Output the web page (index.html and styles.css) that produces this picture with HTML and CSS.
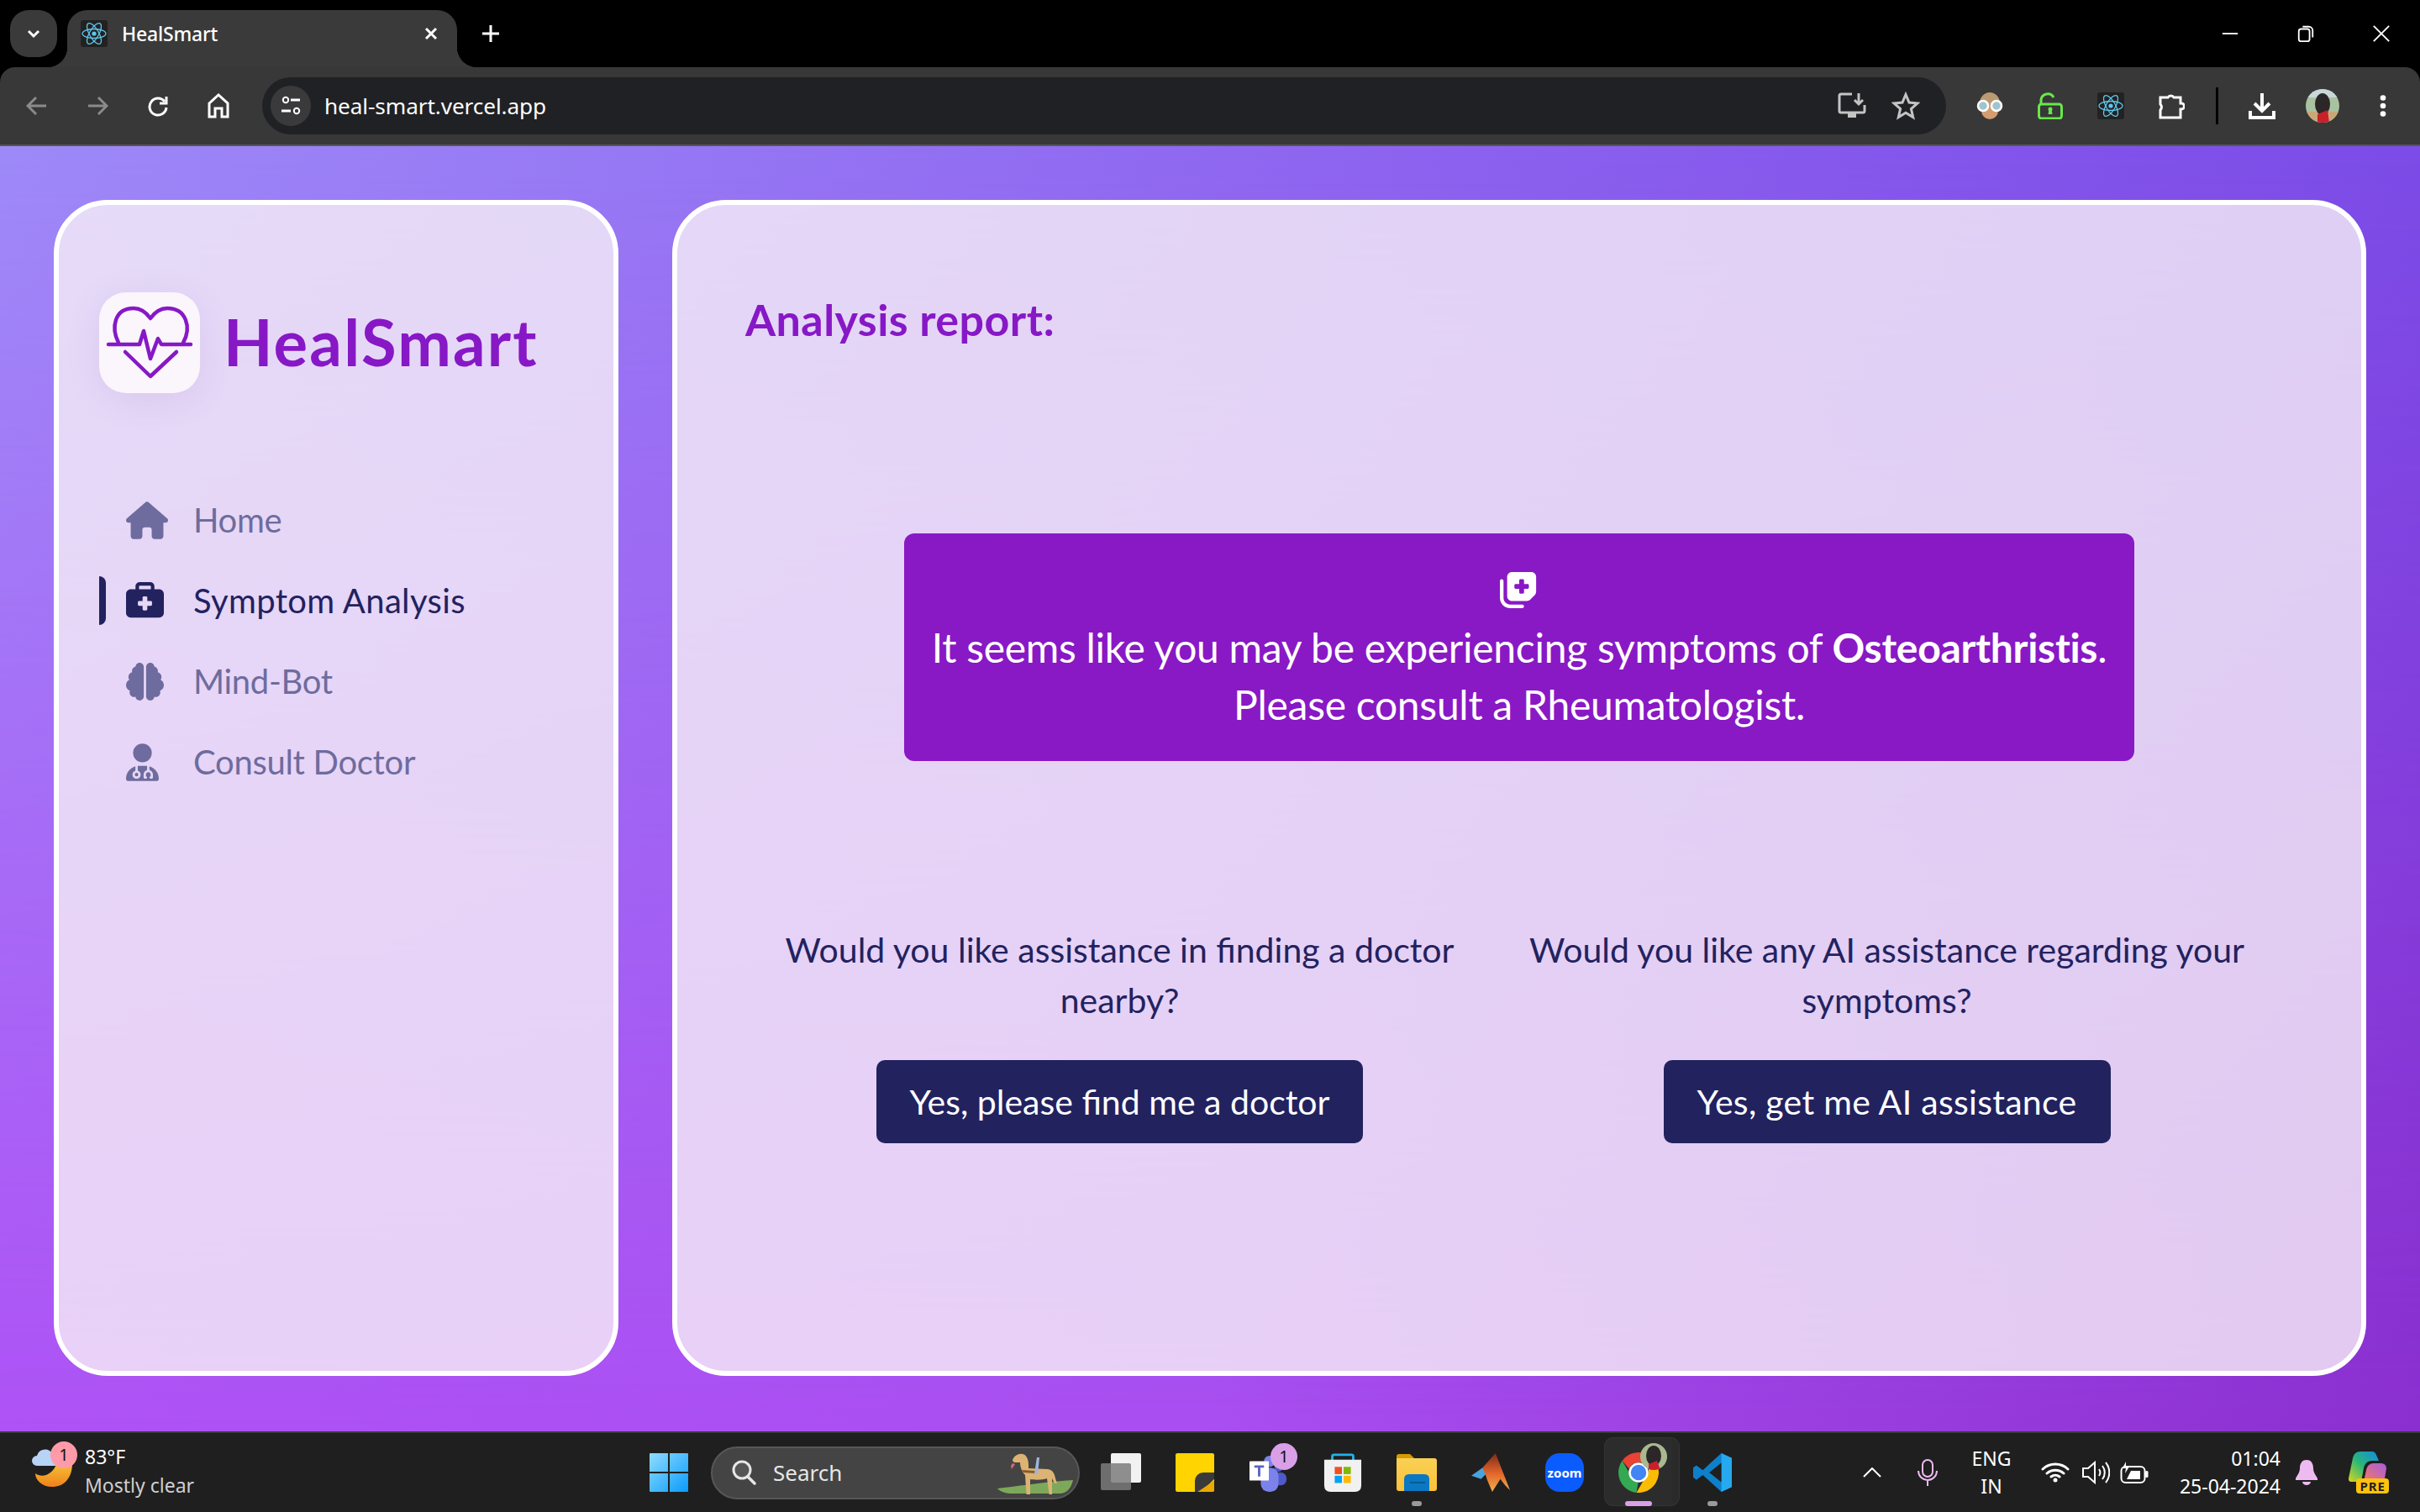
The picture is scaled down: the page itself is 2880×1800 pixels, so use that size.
FILE: index.html
```html
<!DOCTYPE html>
<html lang="en">
<head>
<meta charset="utf-8">
<title>HealSmart</title>
<link rel="stylesheet" href="styles.css">
</head>
<body>
<svg class="defs" width="0" height="0" aria-hidden="true">
  <symbol id="react" viewBox="0 0 32 32">
    <rect width="32" height="32" rx="3" fill="#222"/>
    <g fill="none" stroke="#5fc8ee" stroke-width="1.3">
      <ellipse cx="16" cy="16" rx="14" ry="5.500"/>
      <ellipse cx="16" cy="16" rx="14" ry="5.500" transform="rotate(60 16 16)"/>
      <ellipse cx="16" cy="16" rx="14" ry="5.500" transform="rotate(120 16 16)"/>
    </g>
    <circle cx="16" cy="16" r="2.600" fill="#5fc8ee"/>
  </symbol>
</svg>

<header class="tabstrip">
  <div class="tablist"><svg class="ico16" viewBox="0 0 16 16"><path d="M2 5l6 6 6-6" class="st-w3"/></svg></div>
  <div class="tab">
    <svg class="favicon"><use href="#react"/></svg>
    <span class="tab-title">HealSmart</span>
    <svg class="tab-x" viewBox="0 0 16 16"><path d="M2 2l12 12M14 2L2 14" class="st-w3"/></svg>
  </div>
  <svg class="newtab" viewBox="0 0 20 20"><path d="M10 0v20M0 10h20" class="st-w3"/></svg>
  <div class="winctl">
    <svg class="win-ico" viewBox="0 0 24 24"><path d="M2 12h20" class="st-w2"/></svg>
    <svg class="win-ico" viewBox="0 0 24 24"><rect x="3" y="6" width="14" height="16" rx="3" class="st-w2"/><path d="M8 3h8a5 5 0 0 1 5 5v9" class="st-w2"/></svg>
    <svg class="win-ico" viewBox="0 0 24 24"><path d="M2 2l20 20M22 2L2 22" class="st-w2"/></svg>
  </div>
</header>

<nav class="toolbar">
  <div class="tbtn"><svg class="ico26" viewBox="0 0 26 26"><path d="M24 13H3M12 3L2 13l10 10" class="st-g3"/></svg></div>
  <div class="tbtn"><svg class="ico26" viewBox="0 0 26 26"><path d="M2 13h21M14 3l10 10-10 10" class="st-g3"/></svg></div>
  <div class="tbtn"><svg class="ico26" viewBox="0 0 26 26"><path d="M21 8a10 10 0 1 0 2 7" class="st-w3"/><path d="M23 2v8h-8" class="st-w3"/></svg></div>
  <div class="tbtn"><svg class="ico28" viewBox="0 0 26 30"><path d="M2 12L13 2l11 10v16h-7v-10H9v10H2z" class="st-w3"/></svg></div>
  <div class="omnibox">
    <div class="chip"><svg class="ico26" viewBox="0 0 26 26"><circle cx="7" cy="6" r="3.200" class="st-w2"/><path d="M13 6h11M2 19h11" class="st-w3"/><circle cx="20" cy="19" r="3.200" class="st-w2"/></svg></div>
    <span class="url">heal-smart.vercel.app</span>
    <svg class="omni-ico install" viewBox="0 0 34 34"><path d="M17 3H4a2 2 0 0 0-2 2v18a2 2 0 0 0 2 2h26a2 2 0 0 0 2-2v-7" class="st-l3"/><path d="M12 25v6h10v-6" class="fill-l"/><path d="M25 2v12M20 10l5 5 5-5" class="st-l3"/></svg>
    <svg class="omni-ico star" viewBox="0 0 34 34"><path d="M17 3.500l4 9.500 10 .9-7.600 6.600 2.300 10L17 25.200 8.300 30.500l2.300-10L3 13.900l10-.9z" class="st-l3"/></svg>
  </div>
  <div class="exts">
    <div class="tbtn"><svg class="ico32" viewBox="0 0 32 32"><ellipse cx="16" cy="13" rx="12" ry="13" fill="#b99a72"/><ellipse cx="16" cy="22" rx="10" ry="10" fill="#d59c6f"/><circle cx="8" cy="16" r="6" fill="#9fc4cf" stroke="#fff" stroke-width="2.500"/><circle cx="24" cy="16" r="6" fill="#9fc4cf" stroke="#fff" stroke-width="2.500"/></svg></div>
    <div class="tbtn"><svg class="ico32" viewBox="0 0 32 32"><path d="M5 14V9a8 8 0 0 1 15-3" fill="none" stroke="#67e84a" stroke-width="3"/><rect x="2.500" y="14" width="27" height="17" rx="3" fill="none" stroke="#67e84a" stroke-width="3"/><circle cx="16" cy="20" r="2.500" fill="#67e84a"/><path d="M14.500 20h3l1 6h-5z" fill="#67e84a"/></svg></div>
    <div class="tbtn"><svg class="ico32"><use href="#react"/></svg></div>
    <div class="tbtn"><svg class="ico32" viewBox="0 0 32 32"><path d="M3 6h9a4 4 0 0 1 7 0h8v7h1a3 3 0 0 1 0 7h-1v10H3v-9a5.500 5.500 0 0 0 0-7z" class="st-w3"/></svg></div>
    <span class="tsep"></span>
    <div class="tbtn"><svg class="ico32" viewBox="0 0 32 32"><path d="M16 1v20M7 13l9 9 9-9" class="st-w3b"/><path d="M2 22v8h28v-8" class="st-w3b"/></svg></div>
    <div class="tbtn"><svg class="avatar" viewBox="0 0 40 40"><defs><clipPath id="av"><circle cx="20" cy="20" r="20"/></clipPath></defs><g clip-path="url(#av)"><rect width="40" height="40" fill="#a9c2a0"/><rect width="40" height="10" fill="#c9d7d8"/><rect y="27" width="40" height="13" fill="#c9a878"/><ellipse cx="20" cy="18" rx="9" ry="13" fill="#2b2628"/><path d="M14 30l12-5 2 15H14z" fill="#c8202b"/></g></svg></div>
    <div class="tbtn"><svg class="menu" viewBox="0 0 8 26"><circle cx="4" cy="3.500" r="3.300" fill="#fff"/><circle cx="4" cy="13" r="3.300" fill="#fff"/><circle cx="4" cy="22.500" r="3.300" fill="#fff"/></svg></div>
  </div>
</nav>

<main class="page">
  <aside class="card sidebar">
    <div class="brand">
      <div class="logo">
        <svg class="logo-svg" viewBox="0 0 120 120"><path d="M23 60C14 42 18 19 41 19c9 0 15 5 20 12 5-7 11-12 20-12 23 0 29 23 19 41" class="heart"/><path d="M11 62h37l5-16 8 33 9-24 4 7h35" class="heart"/><path d="M31 71l30 29 31-29" class="heart"/></svg>
      </div>
      <h1 class="brand-name">HealSmart</h1>
    </div>
    <ul class="nav">
      <li class="nav-row"><span class="nav-icon"><svg class="fa house" viewBox="0 0 576 512"><path d="M575.800 255.500c0 18-15 32.100-32 32.100h-32l.7 160.200c0 2.700-.2 5.400-.5 8.100V472c0 22.100-17.900 40-40 40H456c-1.100 0-2.200 0-3.300-.1c-1.400 .1-2.800 .1-4.200 .1H416 392c-22.100 0-40-17.900-40-40V448 384c0-17.700-14.300-32-32-32H256c-17.700 0-32 14.300-32 32v64 24c0 22.100-17.900 40-40 40H160 128.100c-1.500 0-3-.1-4.500-.2c-1.200 .1-2.400 .2-3.600 .2H104c-22.100 0-40-17.900-40-40V360c0-.9 0-1.900 .1-2.800V287.600H32c-18 0-32-14-32-32.100c0-9 3-17 10-24L266.400 8c7-7 15-8 22-8s15 2 21 7L564.800 231.500c8 7 12 15 11 24z"/></svg></span><span>Home</span></li>
      <li class="nav-row active"><span class="nav-icon"><svg class="fa sq" viewBox="0 0 512 512"><path d="M184 48H328c4.400 0 8 3.600 8 8V96H176V56c0-4.400 3.600-8 8-8zm-56 8V96H64C28.700 96 0 124.700 0 160V416c0 35.300 28.700 64 64 64H448c35.300 0 64-28.700 64-64V160c0-35.300-28.700-64-64-64H384V56c0-30.900-25.100-56-56-56H184c-30.900 0-56 25.100-56 56zm96 152c0-8.800 7.200-16 16-16h32c8.800 0 16 7.200 16 16v48h48c8.800 0 16 7.200 16 16v32c0 8.800-7.200 16-16 16H288v48c0 8.800-7.200 16-16 16H240c-8.800 0-16-7.200-16-16V320H176c-8.800 0-16-7.200-16-16V272c0-8.800 7.200-16 16-16h48V208z"/></svg></span><span>Symptom Analysis</span></li>
      <li class="nav-row"><span class="nav-icon"><svg class="fa sq" viewBox="0 0 512 512"><path d="M184 0c30.900 0 56 25.100 56 56V456c0 30.900-25.100 56-56 56c-28.900 0-52.700-21.900-55.700-50.100c-5.200 1.400-10.700 2.100-16.300 2.100c-35.300 0-64-28.700-64-64c0-7.400 1.300-14.600 3.600-21.200C21.400 367.400 0 338.200 0 304c0-31.900 18.700-59.500 45.800-72.300C37.100 220.800 32 207 32 192c0-30.700 21.600-56.300 50.400-62.600C80.800 123.900 80 118 80 112c0-29.900 20.600-55.100 48.300-62.100C131.300 21.900 155.100 0 184 0zM328 0c28.900 0 52.600 21.900 55.700 49.900c27.800 7 48.300 32.100 48.300 62.100c0 6-.8 11.900-2.400 17.400c28.800 6.200 50.400 31.900 50.400 62.600c0 15-5.100 28.800-13.800 39.700C493.300 244.500 512 272.100 512 304c0 34.200-21.400 63.400-51.600 74.800c2.300 6.600 3.600 13.800 3.600 21.200c0 35.300-28.700 64-64 64c-5.600 0-11.100-.7-16.300-2.100c-3 28.200-26.800 50.100-55.700 50.100c-30.900 0-56-25.100-56-56V56c0-30.900 25.100-56 56-56z"/></svg></span><span>Mind-Bot</span></li>
      <li class="nav-row"><span class="nav-icon"><svg class="fa doc" viewBox="0 0 448 512"><path d="M224 256A128 128 0 1 0 224 0a128 128 0 1 0 0 256zm-96 55.200C54 332.900 0 401.300 0 482.300C0 498.700 13.300 512 29.700 512H418.300c16.400 0 29.700-13.300 29.700-29.700c0-81-54-149.400-128-171.100V362c27.600 7.100 48 32.200 48 62v40c0 8.800-7.200 16-16 16H336c-8.800 0-16-7.200-16-16s7.200-16 16-16V424c0-17.700-14.300-32-32-32s-32 14.300-32 32v24c8.800 0 16 7.200 16 16s-7.200 16-16 16H256c-8.800 0-16-7.200-16-16V424c0-29.800 20.400-54.900 48-62V304.900c-6-.6-12.100-.9-18.300-.9H178.300c-6.200 0-12.300 .3-18.300 .9v65.400c23.100 6.900 40 28.300 40 53.700c0 30.900-25.100 56-56 56s-56-25.100-56-56c0-25.400 16.900-46.800 40-53.700V311.200zM144 448a24 24 0 1 0 0-48 24 24 0 1 0 0 48z"/></svg></span><span>Consult Doctor</span></li>
    </ul>
  </aside>

  <section class="card content">
    <h2 class="report-title">Analysis report:</h2>
    <div class="alert">
      <svg class="alert-icon" viewBox="0 0 512 512"><path d="M96 352V96c0-35.300 28.700-64 64-64H416c35.300 0 64 28.700 64 64V293.500c0 17-6.700 33.300-18.700 45.300l-58.500 58.500c-12 12-28.300 18.700-45.300 18.700H160c-35.300 0-64-28.700-64-64zM272 128c-8.800 0-16 7.200-16 16v48H208c-8.800 0-16 7.200-16 16v32c0 8.800 7.200 16 16 16h48v48c0 8.800 7.200 16 16 16h32c8.800 0 16-7.200 16-16V256h48c8.800 0 16-7.200 16-16V208c0-8.800-7.200-16-16-16H320V144c0-8.800-7.200-16-16-16H272zm24 336c13.300 0 24 10.700 24 24s-10.700 24-24 24H136C60.900 512 0 451.100 0 376V152c0-13.300 10.700-24 24-24s24 10.700 24 24l0 224c0 48.600 39.400 88 88 88H296z"/></svg>
      <p class="alert-text">It seems like you may be experiencing symptoms of <strong>Osteoarthristis</strong>.<br>Please consult a Rheumatologist.</p>
    </div>
    <div class="choices">
      <div class="choice">
        <p class="question">Would you like assistance in finding a doctor nearby?</p>
        <button class="cta">Yes, please find me a doctor</button>
      </div>
      <div class="choice">
        <p class="question">Would you like any AI assistance regarding your symptoms?</p>
        <button class="cta cta-ai">Yes, get me AI assistance</button>
      </div>
    </div>
  </section>
</main>

<footer class="taskbar">
  <div class="weather">
    <div class="weather-icon">
      <svg class="weather-svg" viewBox="0 0 54 54"><path d="M30 24h14c2 0 4 0 4 2 0 18-10 28-24 28C12 54 4 46 4 38c8 6 22 2 26-14z" fill="url(#moon)"/><defs><linearGradient id="moon" x1="0" y1="0" x2="0" y2="1"><stop offset="0" stop-color="#f5c63a"/><stop offset="1" stop-color="#f0811a"/></linearGradient></defs><path d="M6 29a6 6 0 0 1 0-12 10 10 0 0 1 18-3 8 8 0 0 1 6 15z" fill="#b7d3f5"/></svg>
      <span class="badge pink">1</span>
    </div>
    <div class="weather-text"><span class="temp">83°F</span><span class="cond">Mostly clear</span></div>
  </div>
  <div class="apps">
    <div class="app"><svg class="i48" viewBox="0 0 46 46"><defs><linearGradient id="wl" x1="0" y1="0" x2="1" y2="1"><stop offset="0" stop-color="#8fdcff"/><stop offset="1" stop-color="#0a9bfb"/></linearGradient></defs><path d="M1 0h21v22H0V1a1 1 0 0 1 1-1zM24 0h21a1 1 0 0 1 1 1v21H24zM0 24h22v22H1a1 1 0 0 1-1-1zM24 24h22v21a1 1 0 0 1-1 1H24z" fill="url(#wl)"/></svg></div>
    <div class="search">
      <svg class="search-ico" viewBox="0 0 30 30"><circle cx="13" cy="12" r="10" fill="#555" stroke="#e6e6e6" stroke-width="3"/><path d="M20 20l8 8" stroke="#e6e6e6" stroke-width="3.500" stroke-linecap="round"/></svg>
      <span class="search-label">Search</span>
      <svg class="dog" viewBox="0 0 90 49"><path d="M0 42c20-2 60-8 90-10-2 9-7 16-15 16H18C10 48 4 46 0 42z" fill="#7da85a"/><path d="M18 8c2-5 7-8 12-7 5 1 7 7 7 13v4l23 1c6 1 8 5 9 11l2 6-3 0-3-6v22h-3l-3-22c-5 2-15 2-20 1v25h-4l-2-30c-4-4-6-10-6-15h-6c-2 0-3-2-3-3z" fill="#dcb372"/><path d="M29 20l16 1v3l-14-1z" fill="#8a5a2b"/><path d="M44 24l3-19h3l-2 21z" fill="#9fb6de"/><path d="M18 12l-2 3 1 4 4-6z" fill="#d2697a"/></svg>
    </div>
    <div class="app"><svg class="i48" viewBox="0 0 48 46"><rect x="12" y="0" width="36" height="35" rx="2" fill="#f2f2f2"/><rect y="12" width="36" height="32" rx="2" fill="#7d7d7d" fill-opacity=".85"/></svg></div>
    <div class="app"><svg class="i48" viewBox="0 0 42 42"><rect width="42" height="42" rx="2" fill="#ffd400"/><path d="M42 28L28 42H21V30a9 9 0 0 1 9-9h12z" fill="#3a3a3a"/><path d="M42 30v10a2 2 0 0 1-2 2H24z" fill="#eba800"/></svg></div>
    <div class="app">
      <svg class="i48" viewBox="0 0 48 48"><circle cx="36" cy="18" r="5" fill="#5059c9"/><rect x="30" y="24" width="16" height="16" rx="7" fill="#5059c9"/><circle cx="25" cy="10" r="7" fill="#7b83eb"/><rect x="14" y="18" width="22" height="30" rx="10" fill="#7b83eb"/><rect y="10" width="24" height="24" rx="1" fill="#fff"/><path d="M6 15h12v3h-4.500v11h-3V18H6z" fill="#5a62c8"/></svg>
      <span class="badge lilac">1</span>
    </div>
    <div class="app"><svg class="i48" viewBox="0 0 46 48"><path d="M10 10V4q0-2 2-2h22q2 0 2 2v6" fill="none" stroke="#21b1e8" stroke-width="3"/><path d="M0 8h46v32q0 8-8 8H8q-8 0-8-8z" fill="#f1f1f1"/><rect x="13" y="17" width="9" height="9" fill="#f25022"/><rect x="24" y="17" width="9" height="9" fill="#7fba00"/><rect x="13" y="28" width="9" height="9" fill="#00a4ef"/><rect x="24" y="28" width="9" height="9" fill="#ffb900"/></svg></div>
    <div class="app">
      <svg class="i48" viewBox="0 0 48 44"><path d="M0 3q0-3 3-3h13l5 5h-21z" fill="#d69a00"/><path d="M0 5h45q3 0 3 3v33q0 3-3 3H3q-3 0-3-3z" fill="url(#fd)"/><defs><linearGradient id="fd" x1="0" y1="0" x2="0" y2="1"><stop offset="0" stop-color="#f9d054"/><stop offset="1" stop-color="#fcc23a"/></linearGradient></defs><path d="M9 44V30q0-6 6-6h18q6 0 6 6v14z" fill="#0a78c2"/><rect x="16" y="33" width="18" height="2" fill="#075b96"/></svg>
      <span class="run-dot"></span>
    </div>
    <div class="app"><svg class="i48" viewBox="0 0 48 48"><path d="M0 28l14-10 6 6-8 8z" fill="#4aa3dd"/><path d="M14 18L30 0l18 46-6-6-6-8-10 16-6-14-2-6z" fill="url(#ml)"/><defs><linearGradient id="ml" x1="0" y1="0" x2="0" y2="1"><stop offset="0" stop-color="#7d2a18"/><stop offset=".5" stop-color="#e0622a"/><stop offset="1" stop-color="#f2b24a"/></linearGradient></defs></svg></div>
    <div class="app"><svg class="i48" viewBox="0 0 48 48"><rect width="48" height="48" rx="18" fill="#0b5cff"/></svg><span class="zoom-label">zoom</span></div>
    <div class="app chrome">
      <svg class="i48" viewBox="0 0 48 48"><path d="M24 0a24 24 0 0 1 20.800 12H24a12 12 0 0 0-11.200 7.600L4.600 10A24 24 0 0 1 24 0z" fill="#ea4335"/><path d="M4.600 10l9 15.400a12 12 0 0 0 10 10.500L21.500 47.900A24 24 0 0 1 4.600 10z" fill="#34a853"/><path d="M44.800 12A24 24 0 0 1 21.500 47.900l10.200-17.700A12 12 0 0 0 32 12z" fill="#fbbc04"/><circle cx="24" cy="24" r="10.500" fill="#4285f4" stroke="#fff" stroke-width="2.500"/></svg>
      <svg class="chrome-av" viewBox="0 0 32 32"><defs><clipPath id="av2"><circle cx="16" cy="16" r="16"/></clipPath></defs><g clip-path="url(#av2)"><rect width="32" height="32" fill="#a9b88f"/><ellipse cx="16" cy="15" rx="9" ry="12" fill="#2b2628"/><path d="M10 25l10-4 4 11H10z" fill="#c8202b"/></g></svg>
      <span class="run-bar"></span>
    </div>
    <div class="app">
      <svg class="i48" viewBox="0 0 48 48"><path d="M35 0l13 6v36l-13 6L12 27 4 33 0 30V18l4-3 8 6z" fill="#0e7fc9"/><path d="M35 0l13 6v36l-13 6z" fill="#26a9ee"/><path d="M35 12L20 24l15 12z" fill="#1f1f1f"/></svg>
      <span class="run-dot"></span>
    </div>
  </div>
  <div class="tray">
    <svg class="tray-chev" viewBox="0 0 22 12"><path d="M1 11L11 1l10 10" class="st-w2"/></svg>
    <svg class="tray-mic" viewBox="0 0 24 32"><rect x="6" y="1" width="12" height="20" rx="6" class="st-p2"/><path d="M1 14a11 11 0 0 0 22 0M12 25v7" class="st-p2"/></svg>
    <div class="lang"><span>ENG</span><span>IN</span></div>
    <svg class="tray-wifi" viewBox="0 0 34 24"><path d="M2 8a22 22 0 0 1 30 0M7 13a15 15 0 0 1 20 0M12 17a8 8 0 0 1 10 0" class="st-w3r"/><circle cx="17" cy="21" r="2.500" fill="#fff"/></svg>
    <svg class="tray-vol" viewBox="0 0 34 28"><path d="M2 9h6l8-7v24l-8-7H2z" class="st-w2"/><path d="M21 10a7 7 0 0 1 0 8M25 6a13 13 0 0 1 0 16M29 2a19 19 0 0 1 0 24" class="st-w2"/></svg>
    <svg class="tray-bat" viewBox="0 0 34 26"><rect x="1.500" y="6" width="28" height="19" rx="5" class="st-w2"/><rect x="30" y="11" width="3.500" height="8" rx="1.500" fill="#fff"/><path d="M8 21l5-10h11v10z" fill="#fff"/><path d="M7 0L3 8h4l-1 6 5-8H7z" fill="#fff"/></svg>
    <div class="clock"><span>01:04</span><span>25-04-2024</span></div>
    <svg class="tray-bell" viewBox="0 0 26 30"><path d="M13 0c6 0 8 5 8 10 0 5 3 8 5 12v2H0v-2c2-4 5-7 5-12C5 5 7 0 13 0z" fill="#eebbf0"/><path d="M8 26h10a5 4 0 0 1-10 0z" fill="#eebbf0"/></svg>
    <div class="copilot">
      <svg class="copilot-svg" viewBox="0 0 46 40"><path d="M14 0h14c3 0 4 2 5 4l3 7h-8c-6 0-9 4-10 9l-3 16H3c-3 0-3-3-3-4L5 8c1-5 4-8 9-8z" fill="url(#cpa)"/><path d="M18 36l3-14c1-5 4-8 9-8h8c4 0 7 2 7 6l-3 18H24l-6 0z" fill="url(#cpb)"/><defs><linearGradient id="cpa" x1="0" y1="1" x2="1" y2="0"><stop offset="0" stop-color="#d8d61f"/><stop offset=".5" stop-color="#27b67a"/><stop offset="1" stop-color="#1789e6"/></linearGradient><linearGradient id="cpb" x1="0" y1="1" x2="1" y2="0"><stop offset="0" stop-color="#f57a5c"/><stop offset="1" stop-color="#a85ce0"/></linearGradient></defs></svg>
      <span class="pre">PRE</span>
    </div>
  </div>
</footer>
</body>
</html>
```

FILE: styles.css
```css
* { box-sizing: border-box; }
html, body { margin: 0; padding: 0; }
body {
  width: 2880px;
  height: 1800px;
  overflow: hidden;
  display: flex;
  flex-direction: column;
  background: #000;
  font-family: "Lato", "Noto Sans", sans-serif;
}
.defs { position: absolute; }
h1, h2, p, ul { margin: 0; padding: 0; }
svg { display: block; flex: none; }

/* stroke helpers */
.st-w3, .st-w2, .st-g3, .st-l3, .st-w3b, .st-w3r, .st-p2 { fill: none; }
.st-w3 { stroke: #fff; stroke-width: 3; }
.st-w3b { stroke: #fff; stroke-width: 4; }
.st-w3r { stroke: #fff; stroke-width: 3; stroke-linecap: round; }
.st-w2 { stroke: #fff; stroke-width: 2; }
.st-g3 { stroke: #8b8b8b; stroke-width: 3; }
.st-l3 { stroke: #c4c4c4; stroke-width: 3; }
.st-p2 { stroke: #eebbf0; stroke-width: 2; }
.fill-l { fill: #c4c4c4; }

/* tab strip */
.tabstrip {
  height: 80px;
  display: flex;
  align-items: flex-start;
  padding: 12px 0 0 12px;
  background: #000;
  color: #fff;
  font-family: "Noto Sans", sans-serif;
  flex: none;
}
.tablist {
  width: 56px; height: 56px;
  border-radius: 22px;
  background: #3a3a3a;
  display: flex; align-items: center; justify-content: center;
}
.ico16 { width: 16px; height: 16px; }
.tab {
  position: relative;
  margin-left: 12px;
  width: 464px; height: 68px;
  background: #3a3a3a;
  border-radius: 24px 24px 0 0;
  display: flex; align-items: center;
  padding: 0 0 12px 16px;
}
.tab::before, .tab::after {
  content: "";
  position: absolute;
  bottom: 0;
  width: 24px; height: 24px;
}
.tab::before { left: -24px; background: radial-gradient(circle at 0 0, transparent 24px, #3a3a3a 24.5px); }
.tab::after { right: -24px; background: radial-gradient(circle at 100% 0, transparent 24px, #3a3a3a 24.5px); }
.favicon { width: 32px; height: 32px; }
.tab-title { margin-left: 17px; font-size: 23px; font-weight: 500; letter-spacing: -.2px; }
.tab-x { width: 16px; height: 18px; margin-left: auto; margin-right: 23px; }
.newtab { width: 20px; height: 22px; margin: 17px 0 0 30px; }
.winctl { margin-left: auto; display: flex; align-items: center; height: 56px; padding: 0 35px 0 0; gap: 68px; }
.win-ico { width: 22px; height: 22px; }

/* toolbar */
.toolbar {
  height: 94px;
  flex: none;
  background: #383838;
  border-bottom: 2px solid #555;
  border-radius: 18px 18px 0 0;
  display: flex;
  align-items: center;
  padding: 0 8px;
}
.tbtn { width: 72px; height: 68px; display: flex; align-items: center; justify-content: center; flex: none; }
.ico26 { width: 26px; height: 26px; }
.ico28 { width: 26px; height: 30px; }
.ico32 { width: 32px; height: 32px; }
.avatar { width: 40px; height: 40px; }
.menu { width: 8px; height: 26px; }
.omnibox {
  margin-left: 16px;
  width: 2004px; height: 68px;
  border-radius: 34px;
  background: #202124;
  display: flex; align-items: center;
  padding-left: 10px;
  color: #fff;
  font-family: "Noto Sans", sans-serif;
}
.chip { width: 48px; height: 48px; border-radius: 50%; background: #3a3a3c; display: flex; align-items: center; justify-content: center; }
.url { margin-left: 16px; font-size: 26.200px; letter-spacing: -.1px; }
.omni-ico { width: 34px; height: 34px; }
.install { margin-left: auto; }
.star { margin: 0 31px 0 30px; }
.exts { margin-left: 16px; display: flex; align-items: center; }
.tsep { width: 36px; height: 44px; flex: none; background: linear-gradient(#000, #000) center / 3px 100% no-repeat; }

/* page */
.page {
  position: relative;
  flex: 1;
  display: flex;
  gap: 64px;
  padding: 64px 64px 66px;
  background: linear-gradient(to right, #9e8af8 0%, #8c62ef 60%, #7c4ce8 100%);
  min-height: 0;
}
.page::before {
  content: "";
  position: absolute;
  inset: 0;
  background: linear-gradient(to right, #ae52f5 0%, #a94ef0 50%, #8b2fcf 100%);
  -webkit-mask-image: linear-gradient(to bottom, transparent, #000);
  mask-image: linear-gradient(to bottom, transparent, #000);
}
.card {
  position: relative;
  border: 6px solid #fff;
  border-radius: 64px;
  background: rgba(247, 240, 247, .8);
}
.sidebar { width: 672px; flex: none; padding: 104px 48px 0; color: #6e6c9e; }
.brand { display: flex; align-items: center; }
.logo { width: 120px; height: 120px; border-radius: 32px; background: #faf6fb; box-shadow: 0 8px 40px rgba(120, 90, 190, .12); flex: none; }
.logo-svg { width: 120px; height: 120px; }
.heart { fill: none; stroke: #8718c6; stroke-width: 4.500; stroke-linejoin: round; stroke-linecap: round; }
.brand-name { margin: 0 0 2px 28px; font-size: 76px; font-weight: 700; color: #8718c6; line-height: 1; letter-spacing: 2.200px; }

.nav { list-style: none; margin-top: 103px; }
.nav-row { position: relative; height: 96px; display: flex; align-items: center; padding-left: 32px; font-size: 40px; letter-spacing: -.3px; }
.nav-icon { width: 80px; flex: none; }
.fa { height: 45px; fill: currentColor; }
.house { width: 50px; }
.sq { width: 45px; }
.doc { width: 39px; }
.active { color: #22225f; letter-spacing: .35px; }
.active::before { content: ""; position: absolute; left: 0; top: 19px; width: 8px; height: 58px; background: #22225f; border-radius: 0 8px 8px 0; }

.content { flex: 1; padding: 101px 0 0; color: #22225f; }
.report-title { margin-left: 81px; font-size: 52px; line-height: 70px; font-weight: 700; color: #8718c6; letter-spacing: .45px; }
.alert {
  width: 1464px;
  margin: 220px auto 0;
  padding: 43px 0 33px;
  border-radius: 12px;
  background: #8819c5;
  color: #fff;
  text-align: center;
}
.alert-icon { width: 46px; height: 46px; fill: #fff; margin: 0 auto 13px; }
.alert-text { font-size: 48px; line-height: 68px; letter-spacing: -.28px; }
.alert-text strong { font-weight: 700; }
.choices { display: grid; grid-template-columns: 913px 913px; margin: 195px 0 0 70px; }
.choice { display: flex; flex-direction: column; align-items: center; text-align: center; }
.question { width: 880px; font-size: 41px; line-height: 60px; }
.cta {
  margin-top: 41px;
  height: 99px;
  padding: 0 40px;
  border: 0;
  border-radius: 10px;
  background: #22225f;
  color: #fff;
  font: 400 41px "Lato", "Noto Sans", sans-serif;
}
.cta-ai { letter-spacing: .3px; }

/* taskbar */
.taskbar {
  height: 96px;
  flex: none;
  background: #1f1f1f;
  border-top: 2px solid #3b3b3b;
  display: flex;
  color: #fff;
  font-family: "Noto Sans", sans-serif;
}
.weather { width: 752px; flex: none; display: flex; padding-left: 38px; }
.weather-icon { position: relative; width: 63px; height: 94px; }
.weather-svg { width: 54px; height: 54px; margin-top: 10px; }
.badge { position: absolute; width: 32px; height: 32px; border-radius: 50%; color: #111; font-size: 20px; line-height: 32px; text-align: center; }
.pink { left: 22px; top: 10px; background: #ff9aa9; }
.weather-text { display: flex; flex-direction: column; font-size: 23px; line-height: 34px; padding-top: 11px; }
.cond { color: #cfcfcf; }
.apps { display: flex; align-items: center; flex: none; }
.app { position: relative; width: 88px; height: 94px; display: flex; align-items: center; justify-content: center; flex: none; }
.i48 { width: 48px; height: 46px; }
.lilac { left: 46px; top: 12px; background: #d9a0e8; }
.search {
  width: 439px; height: 63px;
  margin: 0 5px 0 6px;
  border-radius: 32px;
  background: #444;
  border: 2px solid #575757;
  display: flex; align-items: center;
  padding-left: 22px;
  color: #e6e6e6;
  position: relative;
}
.search-ico { width: 30px; height: 30px; }
.search-label { margin-left: 20px; font-size: 26px; }
.dog { position: absolute; right: 6px; bottom: 4px; width: 90px; height: 49px; }
.run-dot { position: absolute; left: 38px; bottom: 7px; width: 12px; height: 6px; border-radius: 3px; background: #9a9a9a; }
.zoom-label { position: absolute; left: 0; right: 0; top: 37px; text-align: center; font-size: 15px; font-weight: 700; color: #fff; }
.chrome::before { content: ""; position: absolute; left: 4px; top: 6px; width: 80px; height: 80px; border-radius: 10px; background: #2c2c2c; border-right: 8px solid #2a2a2a; box-shadow: 0 0 0 1px #343434; }
.chrome .i48 { position: relative; width: 48px; height: 48px; }
.chrome-av { position: absolute; left: 46px; top: 12px; width: 32px; height: 32px; }
.run-bar { position: absolute; left: 28px; bottom: 7px; width: 32px; height: 6px; border-radius: 3px; background: #d9a0e8; }
.tray { flex: 1; position: relative; display: flex; align-items: center; padding-left: 135px; }
.tray-chev { width: 22px; height: 12px; }
.tray-mic { width: 24px; height: 32px; margin-left: 43px; }
.lang { width: 60px; margin-left: 34px; display: flex; flex-direction: column; align-items: center; font-size: 23px; line-height: 33px; }
.tray-wifi { width: 34px; height: 24px; margin-left: 29px; }
.tray-vol { width: 34px; height: 28px; margin-left: 14px; }
.tray-bat { width: 34px; height: 26px; margin-left: 12px; }
.clock { width: 157px; display: flex; flex-direction: column; align-items: flex-end; font-size: 23px; line-height: 33px; }
.tray-bell { width: 26px; height: 30px; margin-left: 18px; }
.copilot { position: relative; width: 46px; height: 50px; margin-left: 37px; }
.copilot-svg { width: 46px; height: 40px; }
.pre { position: absolute; right: -2px; bottom: 0; background: #ffc20e; color: #222; font-size: 15px; font-weight: 700; line-height: 18px; padding: 0 4px; border-radius: 4px; letter-spacing: 1px; }
```
